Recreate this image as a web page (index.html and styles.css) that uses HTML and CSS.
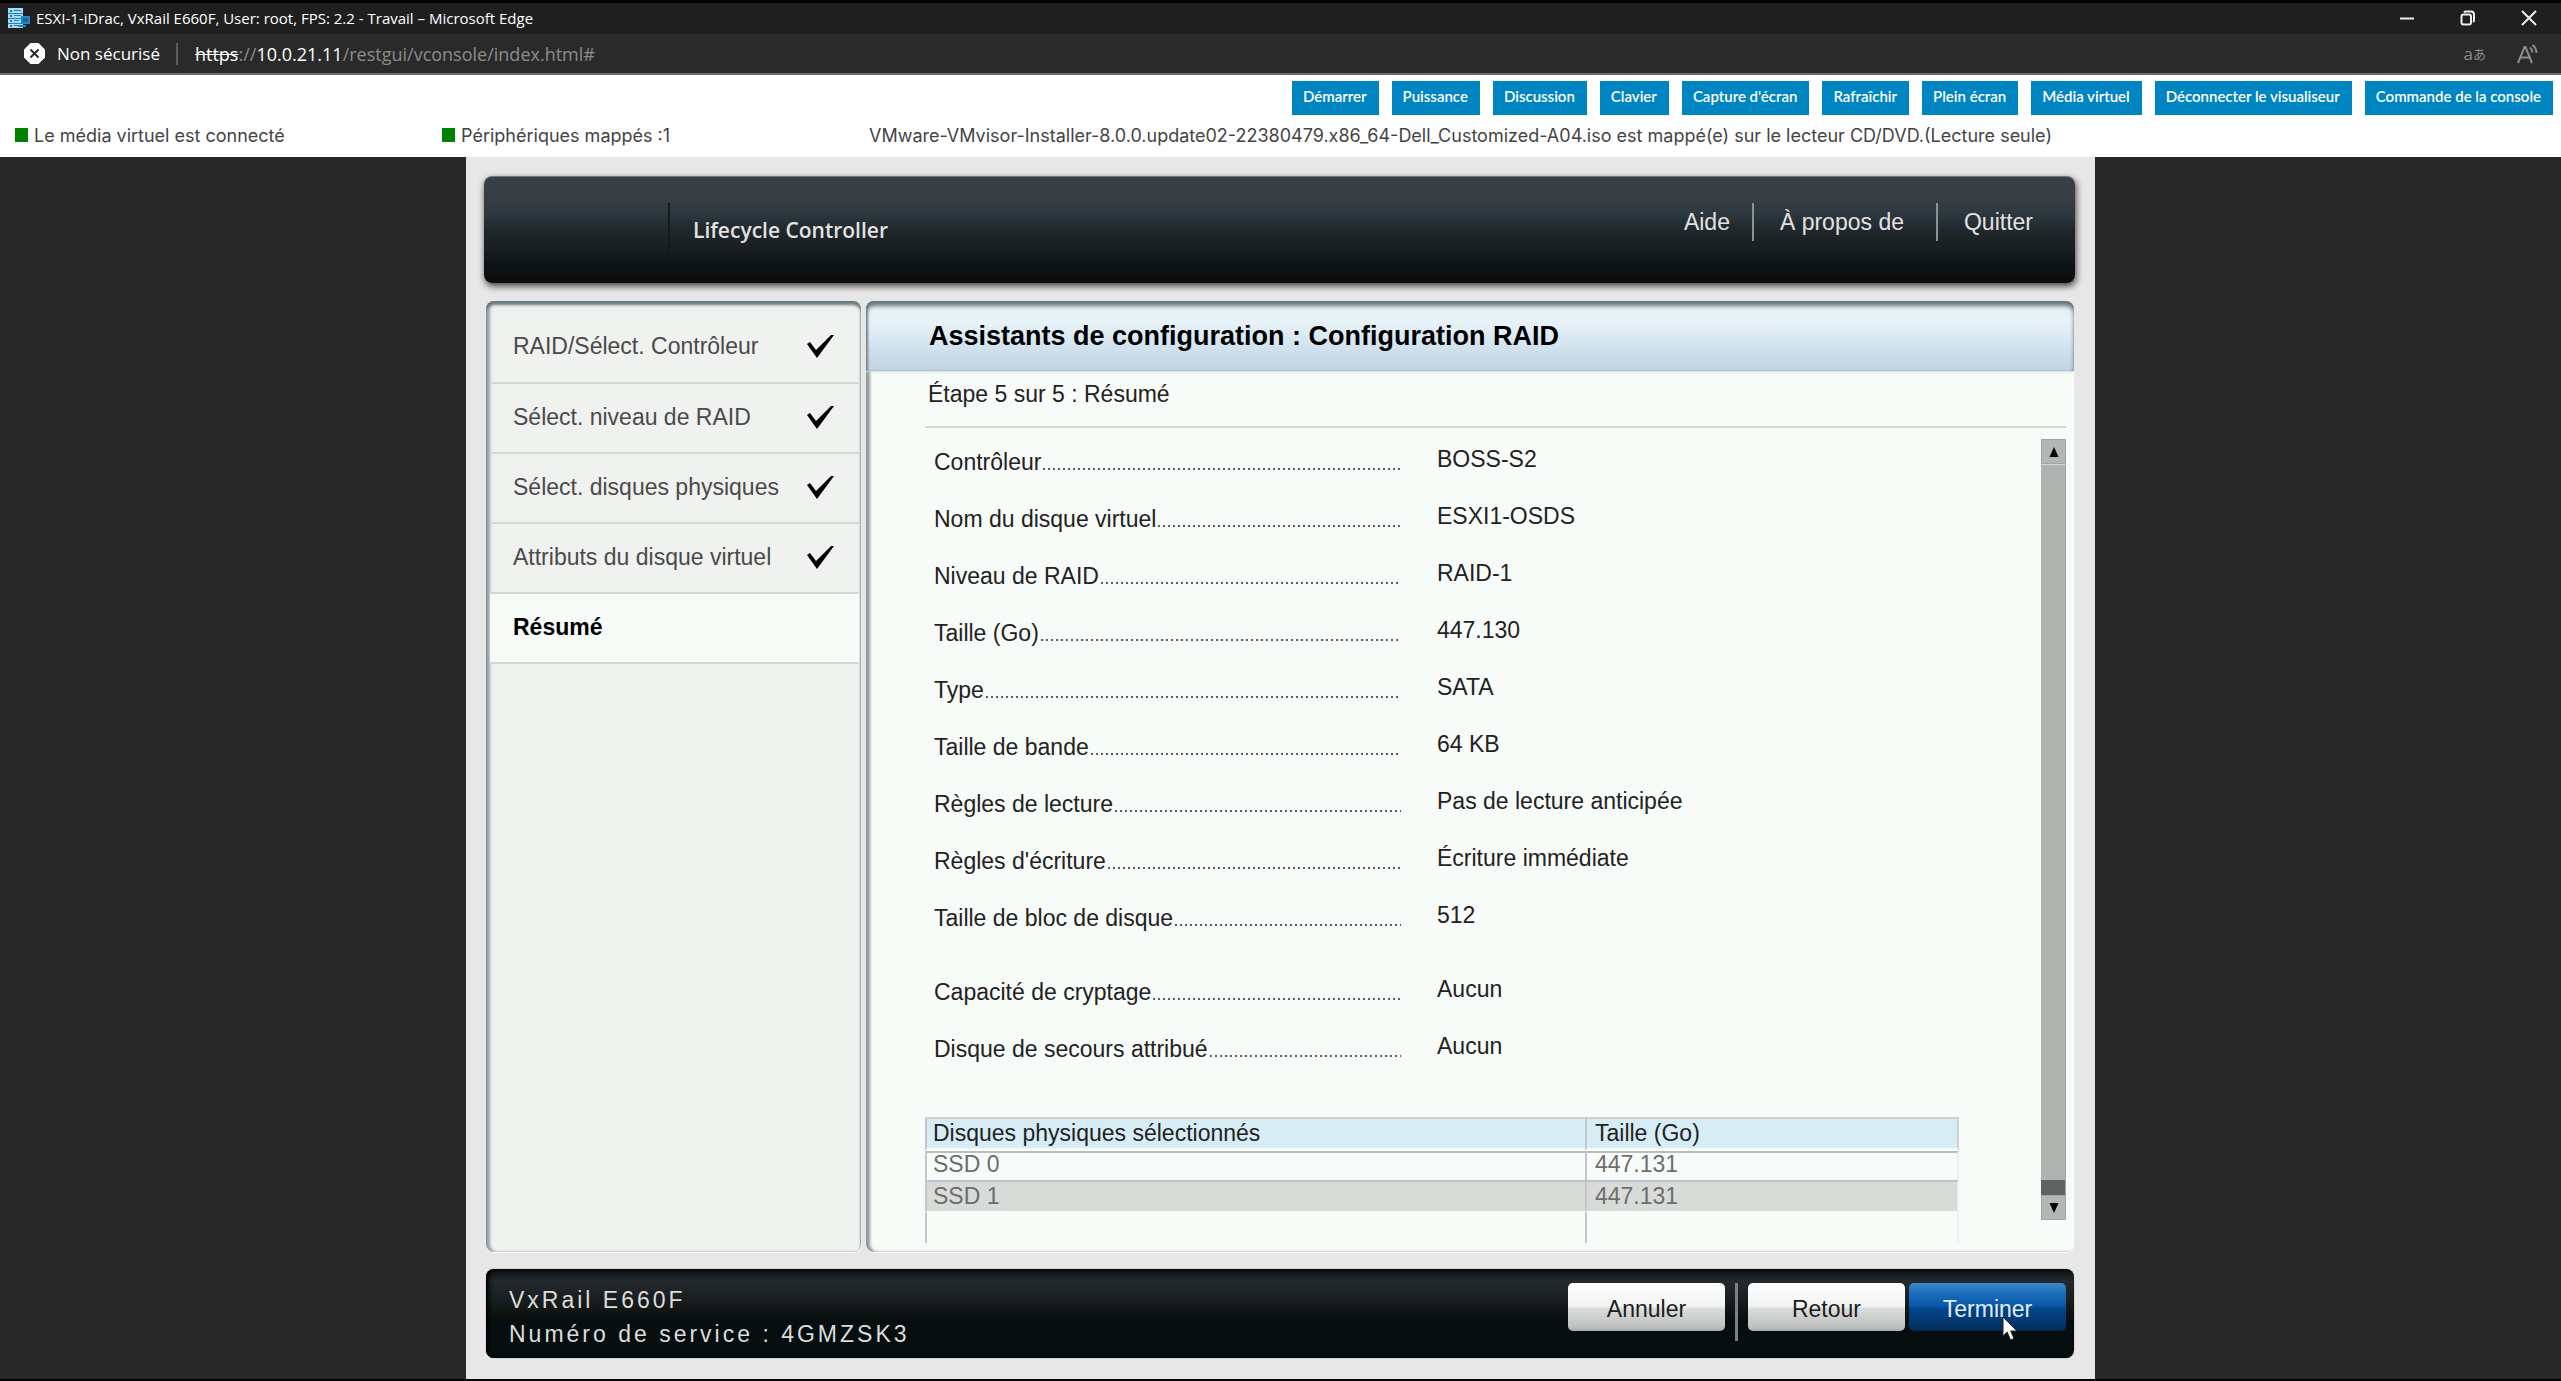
FILE: index.html
```html
<!DOCTYPE html>
<html lang="fr">
<head>
<meta charset="utf-8">
<title>ESXI-1-iDrac, VxRail E660F, User: root, FPS: 2.2</title>
<link rel="stylesheet" href="styles.css">
</head>
<body>
<div class="titlebar">
  <svg class="app-icon" width="22" height="20" viewBox="0 0 22 20" aria-hidden="true">
    <path fill="#a5daf3" d="M0 0h15v5H0zM0 5h15v5H0zM0 10h13v5H0zM0 15h15v5H0z"/>
    <path fill="#2b7fae" d="M2 2h2v2H2zM6 2h7v1H6zM2 7h2v2H2zM6 7h7v1H6zM2 12h2v2H2zM6 12h5v1H6zM2 17h2v2H2zM6 17h7v1H6zM0 5h15v1H0zM0 10h13v1H0zM0 15h13v1H0z"/>
    <path fill="#2186c4" d="M13 8h9v8h-9zM10 17h8v2h-8z"/>
    <path fill="#17669a" d="M15 10h5v4h-5z"/>
  </svg>
  <span class="window-title">ESXI-1-iDrac, VxRail E660F, User: root, FPS: 2.2 - Travail – Microsoft Edge</span>
  <div class="window-controls">
    <button type="button" aria-label="Réduire"><svg width="16" height="16" viewBox="0 0 16 16"><path d="M1 8.500h14"/></svg></button>
    <button type="button" aria-label="Restaurer"><svg width="16" height="16" viewBox="0 0 16 16"><rect x="1.500" y="4.500" width="9.500" height="10" rx="2"/><path d="M4 2.500C4.500 1.800 5 1.500 6 1.500h5c2 0 3 1 3 3v5.500c0 1-.3 1.600-1 2"/></svg></button>
    <button type="button" aria-label="Fermer"><svg width="16" height="16" viewBox="0 0 16 16"><path d="M1 1l14 14M15 1L1 15"/></svg></button>
  </div>
</div>
<div class="addressbar">
  <svg class="insecure-icon" width="21" height="21" viewBox="0 0 21 21" aria-hidden="true"><path fill="#fff" d="M6.500 0h8L21 6.500v8L14.500 21h-8L0 14.500v-8z"/><path stroke="#2a2a2a" stroke-width="2" d="M6.500 6.500l8 8M14.500 6.500l-8 8"/></svg>
  <span class="insecure">Non sécurisé</span>
  <span class="sep"></span>
  <span class="url"><s>https</s>://<b>10.0.21.11</b>/restgui/vconsole/index.html#</span>
  <div class="page-actions">
    <button type="button" aria-label="Traduire">a<small>あ</small></button>
    <button type="button" aria-label="Lecture à voix haute"><svg width="22" height="20" viewBox="0 0 22 20"><path d="M1 19L7.500 3h1L15 19M3.500 13.500h9M13 3.500c1.500 1.200 2.300 3 2.300 5M15.500 1c2.600 2 4 4.700 4 8"/></svg></button>
  </div>
</div>
<header class="viewer">
  <div class="toolbar">
    <button type="button">Démarrer</button>
    <button type="button">Puissance</button>
    <button type="button">Discussion</button>
    <button type="button">Clavier</button>
    <button type="button">Capture d'écran</button>
    <button type="button">Rafraîchir</button>
    <button type="button">Plein écran</button>
    <button type="button">Média virtuel</button>
    <button type="button">Déconnecter le visualiseur</button>
    <button type="button">Commande de la console</button>
  </div>
  <div class="status">
    <span class="state">Le média virtuel est connecté</span>
    <span class="state">Périphériques mappés :1</span>
    <span>VMware-VMvisor-Installer-8.0.0.update02-22380479.x86_64-Dell_Customized-A04.iso est mappé(e) sur le lecteur CD/DVD.(Lecture seule)</span>
  </div>
</header>
<main class="stage">
  <div class="console">
    <div class="banner">
      <h1>Lifecycle Controller</h1>
      <nav>
        <a href="#">Aide</a>
        <a href="#">À propos de</a>
        <a href="#">Quitter</a>
      </nav>
    </div>
    <div class="panels">
      <ol class="steps">
        <li>RAID/Sélect. Contrôleur<svg width="28" height="24" viewBox="0 0 28 24"><path d="M1 10l3-2 6 8L25 1l3 0L11 24z"/></svg></li>
        <li>Sélect. niveau de RAID<svg width="28" height="24" viewBox="0 0 28 24"><path d="M1 10l3-2 6 8L25 1l3 0L11 24z"/></svg></li>
        <li>Sélect. disques physiques<svg width="28" height="24" viewBox="0 0 28 24"><path d="M1 10l3-2 6 8L25 1l3 0L11 24z"/></svg></li>
        <li>Attributs du disque virtuel<svg width="28" height="24" viewBox="0 0 28 24"><path d="M1 10l3-2 6 8L25 1l3 0L11 24z"/></svg></li>
        <li class="current">Résumé</li>
      </ol>
      <section class="wizard">
        <h2>Assistants de configuration : Configuration RAID</h2>
        <p class="step-title">Étape 5 sur 5 : Résumé</p>
        <div class="wizard-body">
          <div class="summary">
            <dl>
              <div><dt>Contrôleur</dt><dd>BOSS-S2</dd></div>
              <div><dt>Nom du disque virtuel</dt><dd>ESXI1-OSDS</dd></div>
              <div><dt>Niveau de RAID</dt><dd>RAID-1</dd></div>
              <div><dt>Taille (Go)</dt><dd>447.130</dd></div>
              <div><dt>Type</dt><dd>SATA</dd></div>
              <div><dt>Taille de bande</dt><dd>64 KB</dd></div>
              <div><dt>Règles de lecture</dt><dd>Pas de lecture anticipée</dd></div>
              <div><dt>Règles d'écriture</dt><dd>Écriture immédiate</dd></div>
              <div><dt>Taille de bloc de disque</dt><dd>512</dd></div>
            </dl>
            <dl>
              <div><dt>Capacité de cryptage</dt><dd>Aucun</dd></div>
              <div><dt>Disque de secours attribué</dt><dd>Aucun</dd></div>
            </dl>
            <table>
              <thead><tr><th>Disques physiques sélectionnés</th><th>Taille (Go)</th></tr></thead>
              <tbody>
                <tr><td>SSD 0</td><td>447.131</td></tr>
                <tr class="alt"><td>SSD 1</td><td>447.131</td></tr>
                <tr class="empty"><td></td><td></td></tr>
              </tbody>
            </table>
          </div>
          <div class="scrollbar">
            <button type="button" aria-label="Défiler vers le haut"><svg width="10" height="10" viewBox="0 0 10 10"><path d="M5 0l4.500 10h-9z"/></svg></button>
            <div class="track"><div class="thumb"></div></div>
            <button type="button" aria-label="Défiler vers le bas"><svg width="10" height="10" viewBox="0 0 10 10"><path d="M5 10L.5 0h9z"/></svg></button>
          </div>
        </div>
      </section>
    </div>
    <footer class="footer">
      <p>VxRail E660F<br>Numéro de service : 4GMZSK3</p>
      <div class="actions">
        <button type="button">Annuler</button>
        <span class="rule"></span>
        <button type="button">Retour</button>
        <div class="primary-wrap">
          <button type="button" class="primary">Terminer</button>
          <svg class="cursor" width="16" height="25" viewBox="0 0 16 25" aria-hidden="true"><path fill="#fff" stroke="#222" d="M1 1v19l4.200-4 3.300 8 3.500-1.500-3.300-7.500H15z"/></svg>
        </div>
      </div>
    </footer>
  </div>
</main>
</body>
</html>
```
FILE: styles.css
```css
* { box-sizing: border-box; }

body {
  margin: 0;
  min-height: 100vh;
  display: flex;
  flex-direction: column;
  border-top: 3px solid #000;
  border-bottom: 2px solid #000;
  background: #272727;
  font-family: "Liberation Sans", Arial, sans-serif;
}

button { border: 0; margin: 0; padding: 0; font: inherit; }
svg { flex: none; }

/* Browser window */
.titlebar,
.addressbar {
  display: flex;
  align-items: center;
  font-family: "Open Sans", "Noto Sans CJK JP", sans-serif;
  color: #fff;
}
.titlebar { height: 31px; padding: 0 24px 2px 8px; background: #1f1f1f; font-size: 15px; }
.window-title { margin-left: 6px; }
.window-controls { display: flex; gap: 45px; margin-left: auto; }
.window-controls button { display: flex; background: none; }
.window-controls svg { fill: none; stroke: #eee; stroke-width: 2; }

.addressbar {
  height: 41px;
  padding: 0 22px 0 24px;
  background: #2a2a2a;
  border-bottom: 2px solid #6b6b6b;
  font-size: 17px;
}
.insecure { margin-left: 12px; }
.sep { width: 2px; height: 22px; margin: 0 17px 0 16px; background: #5c5c5c; }
.url { color: #8c8c8c; font-size: 18px; }
.url s, .url b { color: #fff; font-weight: 400; }
.page-actions { display: flex; gap: 31px; margin-left: auto; }
.page-actions button { display: flex; align-items: center; background: none; color: #8c8c8c; line-height: 22px; }
.page-actions small { font-size: 13px; }
.page-actions svg { fill: none; stroke: #8c8c8c; stroke-width: 2; }

/* Virtual console toolbar */
.viewer { background: #fff; height: 82px; padding: 6px 8px 0 15px; font-family: Lato, sans-serif; }
.toolbar { display: flex; justify-content: flex-end; gap: 13px; }
.toolbar button {
  height: 34px;
  padding: 0 12px 4px 11px;
  background: #0085c3;
  color: #fff;
  font-size: 15px;
  font-weight: 600;
  white-space: nowrap;
}
.status {
  display: grid;
  grid-template-columns: minmax(0, 427px) minmax(0, 427px) 1fr;
  margin-top: 9px;
  font: 18px/24px Inter, sans-serif;
  color: #444;
  white-space: nowrap;
}
.state::before {
  content: "";
  display: inline-block;
  width: 13px;
  height: 14px;
  margin-right: 6px;
  background: #008000;
}

/* Lifecycle Controller screen */
.stage { flex: 1; display: flex; justify-content: center; }
.console {
  width: 64%;
  max-width: 1629px;
  display: flex;
  flex-direction: column;
  padding: 19px 20px 21px 18px;
  background: #e7e7e7;
  font-size: 23px;
  line-height: 30px;
}

.banner {
  display: flex;
  justify-content: space-between;
  align-items: flex-start;
  height: 107px;
  padding: 26px 33px 0 0;
  border-radius: 8px;
  border-top: 1px solid #6d777c;
  background: linear-gradient(#373f47 0%, #383d43 22%, #2d3840 34%, #20282b 50%, #191e1f 68%, #0d1415 82%, #0c0c0b 100%);
  box-shadow: 1px 3px 7px rgba(0, 0, 0, .75);
}
.banner h1 {
  margin: 0;
  padding-left: 23px;
  margin-left: 184px;
  border-left: 2px solid #14191b;
  color: #e2e2e2;
  font: 600 21px/54px "Open Sans", sans-serif;
}
.banner nav { display: flex; padding-right: 9px; }
.banner a {
  padding: 1px 32px 0 26px;
  border-left: 2px solid #8d9191;
  color: #e2e2e2;
  line-height: 37px;
  text-decoration: none;
}
.banner a:first-child { padding-right: 22px; border: 0; }
.banner a:last-child { padding-right: 0; }

.panels {
  flex: 1;
  display: grid;
  grid-template-columns: 375px 1fr;
  gap: 5px;
  margin: 18px 1px 17px 2px;
}

.steps {
  margin: 0;
  padding: 0;
  list-style: none;
  border-radius: 8px;
  background: #eff2ef;
  color: #4a4a4a;
  box-shadow: inset 0 4px 3px #6a7880, inset 4px 0 3px #9aa4ab, inset -1px 0 0 #ccd0d0, 0 1px 1px #fafafa;
}
.steps li {
  display: flex;
  justify-content: space-between;
  align-items: center;
  height: 70px;
  margin: 0 2px 0 4px;
  padding: 0 25px 2px 23px;
  border-bottom: 2px solid #d5d8d5;
}
.steps li:first-child { height: 83px; padding-top: 11px; }
.steps svg { fill: #000; }
.steps .current { background: #f8fcf9; color: #000; font-weight: 700; }

.wizard {
  display: flex;
  flex-direction: column;
  min-width: 0;
  border-radius: 8px;
  background: #f8fcf9;
  box-shadow: inset 4px 0 3px #8d99a1, 0 1px 1px #fafafa;
}
.wizard h2 {
  margin: 0;
  height: 70px;
  padding-left: 63px;
  border-radius: 8px 8px 0 0;
  background: linear-gradient(#e6f1f6 0%, #e8f3f9 30%, #d2e3f0 65%, #c8d9e5 85%, #c3d3e3 100%);
  box-shadow: inset 0 5px 4px #66747c, inset 2px 0 2px #8d99a1, 0 1px 2px #d5dadd;
  font-size: 27px;
  line-height: 70px;
}
.step-title {
  margin: 0 8px 0 59px;
  padding: 8px 3px 17px;
  border-bottom: 2px solid #d3d8d5;
  color: #222;
}
.wizard-body { flex: 1; display: flex; gap: 8px; padding: 11px 8px 0 59px; }
.summary { flex: 1; padding: 5px 74px 0 0; color: #222; }
.summary dl { margin: 0 0 17px; padding-left: 9px; }
.summary dl div {
  display: grid;
  grid-template-columns: minmax(0, 467px) 1fr;
  column-gap: 36px;
  height: 57px;
}
.summary dt { display: flex; padding-top: 3px; height: 33px; }
.summary dt::after {
  content: "";
  flex: 1;
  height: 2px;
  margin: 21px 0 0 2px;
  background: repeating-linear-gradient(90deg, #5c5e5d 0 2px, transparent 2px 5px);
}
.summary dd { margin: 0; }

.summary table { width: 100%; margin-top: 29px; border-spacing: 0; table-layout: fixed; }
.summary th, .summary td { padding: 0 8px; text-align: left; border-left: 2px solid #c3c6cb; }
.summary th:first-child, .summary td:first-child { width: 660px; padding-left: 6px; }
.summary th {
  height: 34px;
  border-top: 2px solid #cfd4d2;
  border-bottom: 3px solid #f8fcf9;
  background: #d7edf6;
  background-clip: padding-box;
  font-weight: 400;
  line-height: 29px;
}
.summary th:last-child { border-right: 2px solid #cfd4d2; }
.summary td { height: 29px; padding-bottom: 5px; border-top: 2px solid #b9bfbd; color: #6c6e6d; line-height: 22px; }
.summary td:last-child { border-right: 2px solid #edf1ef; }
.summary .alt td { height: 31px; padding-top: 3px; padding-bottom: 4px; border-top-color: #bfc3ce; background: #d8dbd8; }
.summary .empty td { height: 32px; border-top-color: #f8fcf9; }

.scrollbar { display: flex; flex-direction: column; width: 25px; margin-bottom: 32px; }
.scrollbar button {
  height: 25px;
  border: 1px solid #a1a6a5;
  background: #b3b7b4;
  line-height: 0;
}
.track { flex: 1; display: flex; flex-direction: column; justify-content: flex-end; background: #aeb3b0; border-top: 1px solid #d3d6d4; border-right: 1px solid #9fa3a8; }
.thumb { height: 15px; background: #5f6361; }

.footer {
  display: flex;
  justify-content: space-between;
  align-items: flex-start;
  height: 89px;
  margin: 0 1px 0 2px;
  padding: 14px 8px 0 23px;
  border-radius: 8px;
  background: linear-gradient(#0a1012 0%, #23292c 14%, #1b2123 30%, #101413 48%, #060e0f 58%, #060e0f 100%);
  box-shadow: inset 3px 0 4px #000, 0 0 1px #444;
}
.footer p { margin: 0; color: #dcdcdc; line-height: 34px; letter-spacing: 3px; }
.actions { display: flex; align-items: flex-start; }
.actions button {
  width: 157px;
  height: 48px;
  padding-top: 3px;
  border-radius: 5px;
  background: linear-gradient(#fdfefd 0%, #f3f5f4 48%, #dadcdb 54%, #bfc1c0 92%, #a9abaa 100%);
  color: #1c1c1c;
}
.rule { width: 3px; height: 58px; margin: 0 10px; background: #7d8080; }
.primary-wrap { position: relative; margin-left: 4px; }
.actions .primary {
  background: linear-gradient(#4089cb 0%, #1a6cbb 22%, #0a58a8 48%, #02478d 52%, #02305f 95%, #03254a 100%);
  color: #e3edf6;
}
.cursor { position: absolute; left: 93px; top: 33px; }
```
